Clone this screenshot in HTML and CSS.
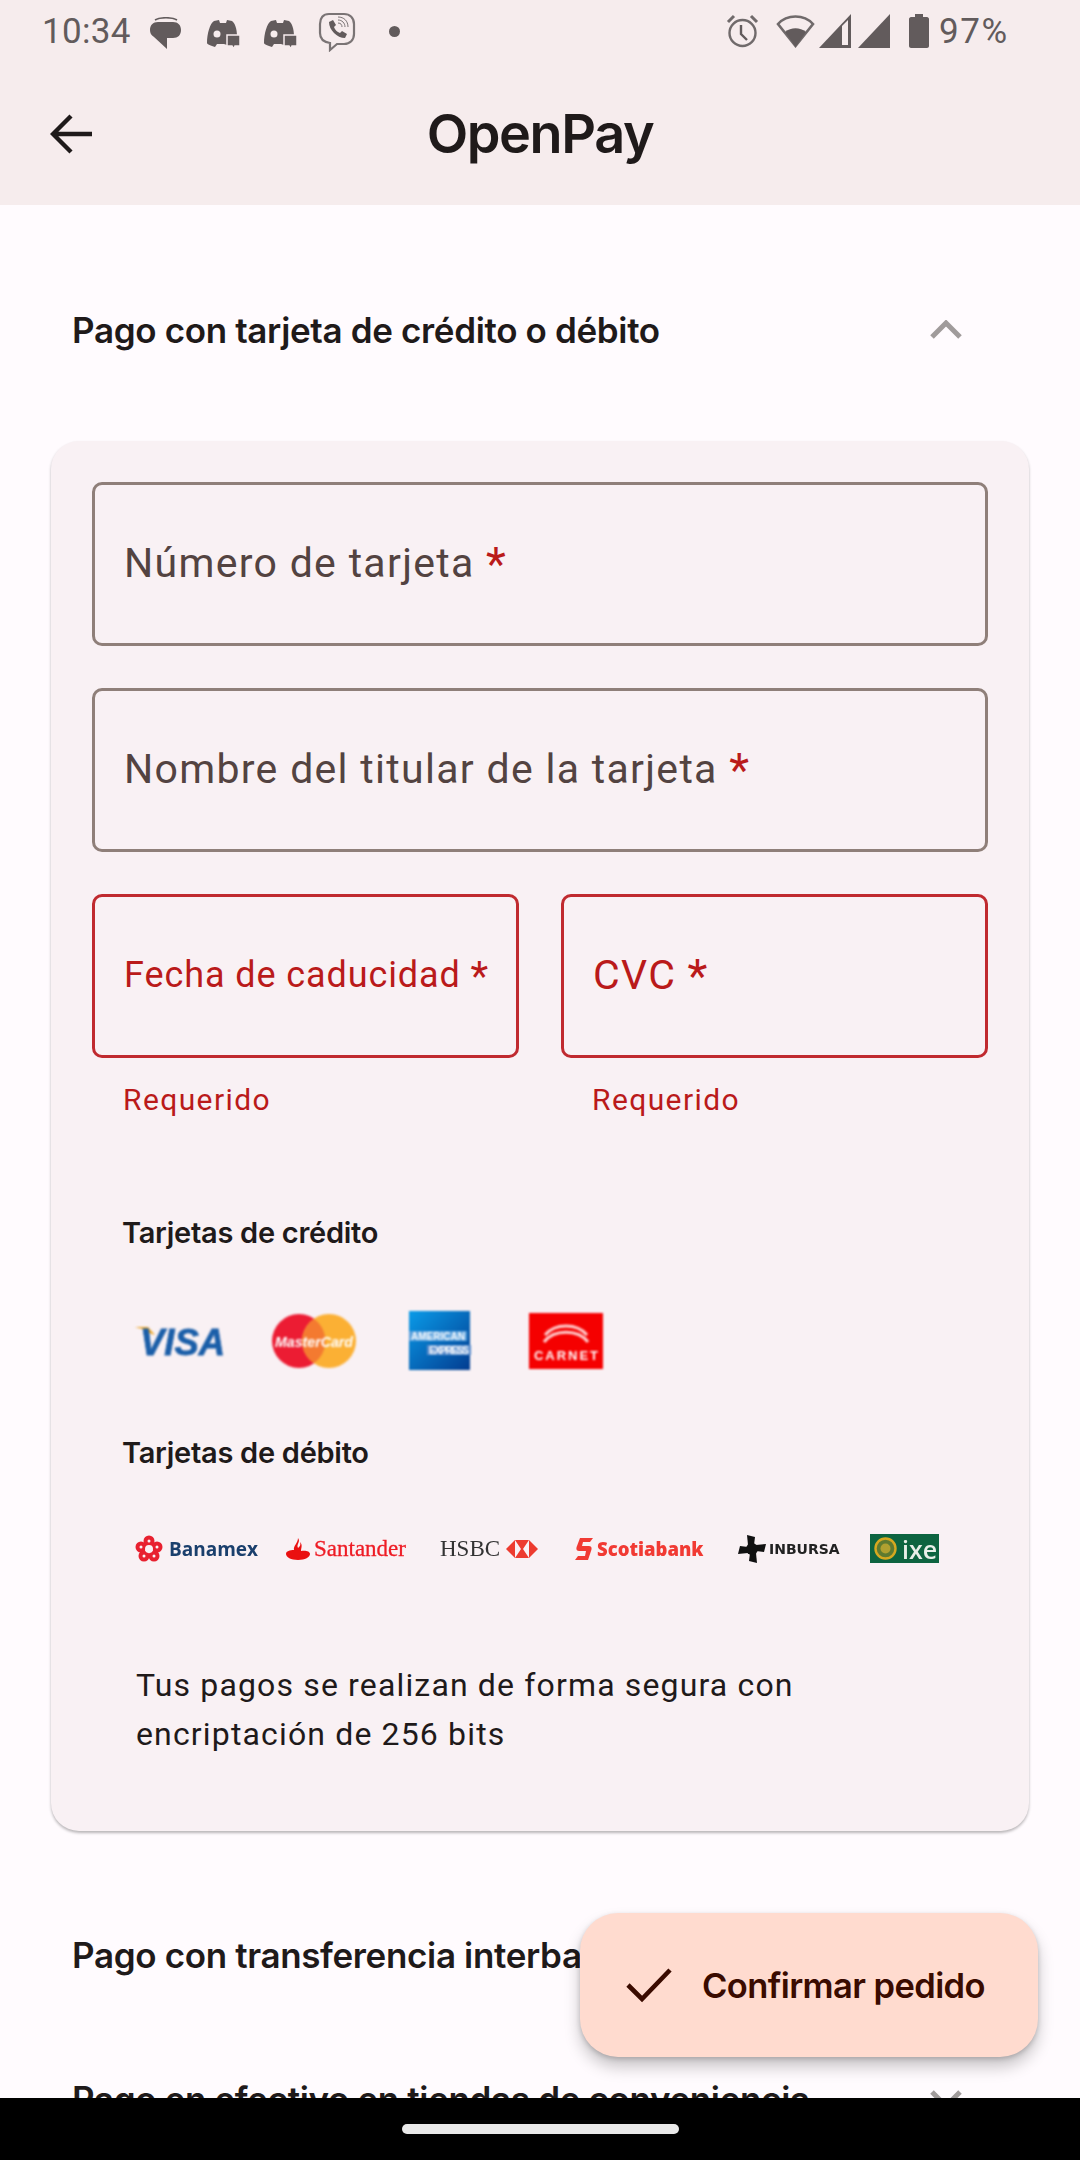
FILE: index.html
```html
<!DOCTYPE html>
<html lang="es">
<head>
    <meta charset="UTF-8">
    <title>OpenPay</title>
    <link rel="stylesheet" href="styles.css">
</head>
<body>
<div class="screen">
    <header class="appbar">
        <div class="statusbar">
            <span class="time">10:34</span>
            <svg class="st-ico" style="left:150px;top:17px" width="32" height="33" viewBox="0 0 32 33"><path d="M5 3C10 0 22 0 27 3" fill="none" stroke="#625b5c" stroke-width="1.6"/><path d="M8 5h15c5 0 8 3 8 8s-3 8-8 8h-6v11L4 20C1 18 0 16 0 13 0 8 3 5 8 5z" fill="#625b5c"/></svg>
            <svg class="st-ico" style="left:206px;top:19px" width="35" height="31" viewBox="0 0 35 31"><path d="M8 2l5-1 1 3h6l1-3 5 1c3 2 5 8 5 15h-7l-3 3v6l-3-1H11l-2 3c-4-1-8-3-8-4 0-9 3-20 7-22z" fill="#625b5c"/><circle cx="11" cy="15" r="3.5" fill="#f6eced"/><path d="M21 16h13v11h-5l-1 3-2-3h-5z" fill="#625b5c" stroke="#f6eced" stroke-width="1.5"/></svg>
            <svg class="st-ico" style="left:263px;top:19px" width="35" height="31" viewBox="0 0 35 31"><path d="M8 2l5-1 1 3h6l1-3 5 1c3 2 5 8 5 15h-7l-3 3v6l-3-1H11l-2 3c-4-1-8-3-8-4 0-9 3-20 7-22z" fill="#625b5c"/><circle cx="11" cy="15" r="3.5" fill="#f6eced"/><path d="M21 16h13v11h-5l-1 3-2-3h-5z" fill="#625b5c" stroke="#f6eced" stroke-width="1.5"/></svg>
            <svg class="st-ico" style="left:318px;top:12px" width="38" height="40" viewBox="0 0 38 40"><path d="M11 2h15c6 0 10 4 10 10v10c0 6-4 10-10 10h-7l-7 6v-7C5 30 2 27 2 21v-9C2 6 5 2 11 2z" fill="none" stroke="#7a7475" stroke-width="2.2"/><path d="M11 10l4-2 3 5-2 2c1 3 3 5 6 6l2-2 5 3-2 4c-8 0-16-8-16-16z" fill="#625b5c"/><path d="M20 8c4 0 7 3 7 7M20 11c3 0 4 2 4 4M20 5c6 0 10 4 10 10" fill="none" stroke="#7a7475" stroke-width="1"/></svg>
            <span class="st-dot"></span>
            <svg class="st-ico" style="left:726px" width="33" height="34" viewBox="0 0 33 34"><circle cx="16.5" cy="19" r="13" fill="none" stroke="#706a6b" stroke-width="2.4"/><path d="M15 11v9l6 6" fill="none" stroke="#625b5c" stroke-width="2.4"/><path d="M2 8l6-6M31 8l-6-6" stroke="#706a6b" stroke-width="3"/></svg>
            <svg class="st-ico" style="left:776px" width="39" height="34" viewBox="0 0 39 34"><path d="M19.5 32L2 10C11 0 28 0 37 10z" fill="none" stroke="#706a6b" stroke-width="2.6"/><path d="M19.5 33L9 18c6-5 15-5 21 0z" fill="#625b5c"/></svg>
            <svg class="st-ico" style="left:819px" width="32" height="34" viewBox="0 0 32 34"><path d="M0 34L32 0v34z" fill="#625b5c"/><path d="M23 12l6-6v25h-6z" fill="#f6eced"/></svg>
            <svg class="st-ico" style="left:858px" width="32" height="34" viewBox="0 0 32 34"><path d="M0 34L32 0v34z" fill="#625b5c"/></svg>
            <svg class="st-ico" style="left:909px" width="20" height="34" viewBox="0 0 20 34"><path d="M6 0h8v3h4c1 0 2 1 2 2v27c0 1-1 2-2 2H2c-1 0-2-1-2-2V5c0-1 1-2 2-2h4z" fill="#625b5c"/></svg>
            <span class="battery">97%</span>
        </div>
        <div class="toolbar">
            <svg class="back" width="42" height="42" viewBox="0 0 42 42"><path d="M42 21H4M21 3L3 21l18 18" fill="none" stroke="#1f1a1a" stroke-width="4.4"/></svg>
            <h1 class="title">OpenPay</h1>
        </div>
    </header>

    <main class="content">
        <section class="acc-head">
            <h2>Pago con tarjeta de crédito o débito</h2>
            <svg class="chev" width="32" height="20" viewBox="0 0 32 20"><path d="M2 17L16 3l14 14" fill="none" stroke="#a09b9b" stroke-width="5"/></svg>
        </section>

        <div class="card">
            <div class="field"><span class="label">Número de tarjeta <b>*</b></span></div>
            <div class="field"><span class="label">Nombre del titular de la tarjeta <b>*</b></span></div>
            <div class="field-row">
                <div>
                    <div class="field field-error"><span class="label label-small">Fecha de caducidad <b>*</b></span></div>
                    <p class="helper">Requerido</p>
                </div>
                <div>
                    <div class="field field-error"><span class="label">CVC <b>*</b></span></div>
                    <p class="helper">Requerido</p>
                </div>
            </div>

            <h3 class="brand-title first">Tarjetas de crédito</h3>
            <div class="credit-logos">
                <svg width="94" height="36" viewBox="0 0 94 36"><path d="M0 4h13l7 8-6-2-3-3z" fill="#eda523"/><text x="5" y="32" class="lg-visa" textLength="85" lengthAdjust="spacingAndGlyphs">VISA</text></svg>
                <svg width="84" height="54" viewBox="0 0 84 54" class="lg-mc"><circle cx="27" cy="27" r="27" fill="#ec1c33"/><circle cx="57" cy="27" r="27" fill="#fbb034"/><path d="M42 5a27 27 0 0 1 0 44a27 27 0 0 1 0-44z" fill="#f47a30"/><text x="3" y="33" class="lg-mc-text" textLength="78" lengthAdjust="spacingAndGlyphs">MasterCard</text></svg>
                <svg width="68" height="62" viewBox="0 0 68 62" class="lg-amex"><defs><linearGradient id="amex" x1="0" y1="0" x2="1" y2="1"><stop offset="0" stop-color="#0a9be8"/><stop offset="1" stop-color="#023c90"/></linearGradient></defs><rect x="6" y="1" width="61" height="59" fill="url(#amex)"/><rect x="6" y="21" width="58" height="10" fill="#5aa0dc"/><rect x="24" y="35" width="44" height="10" fill="#5a8ccc"/><text x="8" y="30" class="lg-amex-text" textLength="54">AMERICAN</text><text x="26" y="44" class="lg-amex-text" textLength="40">EXPRESS</text></svg>
                <svg width="74" height="56" viewBox="0 0 74 56" class="lg-carnet"><rect width="74" height="56" fill="#f50000"/><path d="M16 22c10-12 32-12 42 0M15 29c10-13 34-13 44 0" fill="none" stroke="#ffd0d0" stroke-width="3"/><text x="37" y="47" text-anchor="middle" class="lg-carnet-text" textLength="64">CARNET</text></svg>
            </div>

            <h3 class="brand-title">Tarjetas de débito</h3>
            <div class="debit-logos">
                <span class="bank banamex"><svg width="28" height="28" viewBox="0 0 28 28"><circle cx="14" cy="6" r="5.5" fill="#e8202f"/><circle cx="6" cy="12" r="5.5" fill="#e8202f"/><circle cx="22" cy="12" r="5.5" fill="#e8202f"/><circle cx="9" cy="21" r="5.5" fill="#e8202f"/><circle cx="19" cy="21" r="5.5" fill="#e8202f"/><circle cx="14" cy="14" r="4" fill="#f9f1f4"/><circle cx="6" cy="12" r="1.5" fill="#f9f1f4"/><circle cx="22" cy="12" r="1.5" fill="#f9f1f4"/><circle cx="14" cy="6" r="1.5" fill="#f9f1f4"/><circle cx="9" cy="21" r="1.5" fill="#f9f1f4"/><circle cx="19" cy="21" r="1.5" fill="#f9f1f4"/></svg>Banamex</span>
                <span class="bank santander"><svg width="24" height="22" viewBox="0 0 24 22"><path d="M12 0c3 4-2 6 0 10 2-2 3-3 2-6 3 3 1 6 1 9 4-1 9 0 9 3 0 3-5 6-12 6S0 19 0 16c0-3 4-4 8-4-1-4 4-7 4-12z" fill="#ea1010"/></svg>Santander</span>
                <span class="bank hsbc">HSBC<svg width="32" height="18" viewBox="0 0 32 18"><path d="M0 9L9 0h14l9 9-9 9H9z" fill="#ed3b2f"/><path d="M9 0l6 9-6 9zM23 0l-6 9 6 9z" fill="#f9f1f4"/></svg></span>
                <span class="bank scotia"><svg width="18" height="22" viewBox="0 0 18 22"><path d="M5 0h13l-3 4H8L7 8h7c3 0 3 3 2 5l-3 9H0l3-4h7l1-5H4C1 13 1 10 2 8z" fill="#f13a33"/></svg>Scotiabank</span>
                <span class="bank inbursa"><svg width="28" height="28" viewBox="0 0 28 28"><g fill="#111"><path d="M9 0l8 2-1 8h-6z"/><path d="M9 0l8 2-1 8h-6z" transform="rotate(90 14 14)"/><path d="M9 0l8 2-1 8h-6z" transform="rotate(180 14 14)"/><path d="M9 0l8 2-1 8h-6z" transform="rotate(270 14 14)"/><circle cx="14" cy="14" r="6"/></g></svg>INBURSA</span>
                <span class="bank ixe"><svg width="23" height="23" viewBox="0 0 23 23"><circle cx="11.5" cy="11.5" r="10" fill="#5e7a30" stroke="#d5a820" stroke-width="2.4"/><circle cx="11.5" cy="11.5" r="5" fill="#b0a030"/></svg>ixe</span>
            </div>

            <p class="secure">Tus pagos se realizan de forma segura con encriptación de 256 bits</p>
        </div>

        <section class="acc-head">
            <h2>Pago con transferencia interbancaria</h2>
        </section>
        <section class="acc-head acc-last">
            <h2>Pago en efectivo en tiendas de conveniencia</h2>
            <svg class="chev" width="32" height="20" viewBox="0 0 32 20"><path d="M2 3l14 14L30 3" fill="none" stroke="#a09b9b" stroke-width="5"/></svg>
        </section>
    </main>

    <button class="fab">
        <svg width="46" height="36" viewBox="0 0 46 36"><path d="M2 18l14 14L44 3" fill="none" stroke="#3a0b00" stroke-width="4.6"/></svg>
        Confirmar pedido
    </button>

    <div class="navbar"><span class="handle"></span></div>
</div>
</body>
</html>
```

FILE: styles.css
```css
* {
    box-sizing: border-box;
}

html, body {
    margin: 0;
    padding: 0;
    background-color: #fffbfe;
}

body {
    font-family: Inter, Roboto, sans-serif;
}

.screen {
    position: relative;
    width: 1080px;
    height: 2160px;
    display: flex;
    flex-direction: column;
    overflow: hidden;
}

/* barra superior */
.appbar {
    height: 205px;
    flex: none;
    background-color: #f6eced;
}

.statusbar {
    position: relative;
    height: 62px;
}

.st-ico {
    position: absolute;
    top: 14px;
}

.time, .battery {
    position: absolute;
    top: 12px;
    font-family: Roboto, sans-serif;
    font-size: 35px;
    line-height: 40px;
    color: #625b5c;
}

.time {
    left: 42px;
    letter-spacing: 0.3px;
}

.battery {
    left: 939px;
    letter-spacing: 1.6px;
}

.st-dot {
    position: absolute;
    left: 389px;
    top: 26px;
    width: 11px;
    height: 11px;
    border-radius: 50%;
    background-color: #625b5c;
}

.toolbar {
    height: 143px;
    display: flex;
    align-items: center;
    justify-content: center;
    position: relative;
}

.back {
    position: absolute;
    left: 50px;
    top: 51px;
}

.title {
    margin: 0;
    font-size: 54px;
    font-weight: 600;
    letter-spacing: -1.4px;
    color: #1f1a1a;
}

/* contenido */
.content {
    flex: 1;
    padding-top: 54px;
    overflow: hidden;
}

.acc-head {
    height: 142px;
    padding: 0 118px 0 72px;
    display: flex;
    align-items: center;
    justify-content: space-between;
}

.acc-last {
    padding-top: 4px;
}

.acc-head h2 {
    margin: 0;
    font-size: 35px;
    font-weight: 600;
    letter-spacing: -0.35px;
    color: #1f1a1a;
    white-space: nowrap;
}

.card {
    margin: 40px 51px 53px;
    height: 1390px;
    padding: 41px 41px 0;
    background-color: #f9f1f4;
    border-radius: 28px;
    box-shadow: 0 2px 3px rgba(0, 0, 0, 0.28);
}

.field {
    height: 164px;
    margin-bottom: 42px;
    padding: 0 0 2px 29px;
    display: flex;
    align-items: center;
    border: 3px solid #8f7f79;
    border-radius: 10px;
}

.label {
    font-family: Roboto, sans-serif;
    font-size: 41px;
    letter-spacing: 1.3px;
    color: #534341;
    white-space: nowrap;
}

.label b {
    font-size: 46px;
    line-height: 0;
    font-weight: 400;
    letter-spacing: 0;
    vertical-align: -3px;
    color: #ba1a1a;
}

.label-small {
    font-size: 36px;
    letter-spacing: 0.9px;
}

.label-small b {
    font-size: 41px;
    vertical-align: -3px;
}

.field-row {
    display: grid;
    grid-template-columns: 427px 427px;
    gap: 42px;
}

.field-error {
    margin-bottom: 0;
    border-color: #c02a2f;
}

.field-error .label {
    color: #ba1a1a;
}

.helper {
    margin: 25px 0 0 31px;
    font-family: Roboto, sans-serif;
    font-size: 30px;
    line-height: 34px;
    letter-spacing: 1.4px;
    color: #ba1a1a;
}

.brand-title {
    margin: 0 0 0 30px;
    font-size: 29px;
    line-height: 36px;
    font-weight: 600;
    letter-spacing: -0.28px;
    color: #1f1a1a;
}

.brand-title.first {
    margin-top: 98px;
}

.credit-logos {
    height: 184px;
    padding: 0 0 5px 43px;
    display: flex;
    align-items: center;
    gap: 43px;
}

.credit-logos svg {
    flex: none;
    overflow: visible;
    filter: blur(0.8px);
}

.lg-amex {
    margin-left: 4px;
}

.lg-carnet {
    margin-left: 15px;
}

.lg-visa {
    font-family: "Liberation Sans", sans-serif;
    font-size: 37px;
    font-weight: 700;
    font-style: italic;
    fill: #1a5ea8;
    stroke: #1a5ea8;
    stroke-width: 0.8px;
}

.lg-mc-text {
    font-family: "Liberation Sans", sans-serif;
    font-size: 15px;
    font-weight: 700;
    font-style: italic;
    fill: #fff;
}

.lg-amex-text {
    font-family: "Liberation Sans", sans-serif;
    font-size: 10px;
    font-weight: 700;
    fill: #fff;
}

.lg-carnet-text {
    font-family: "Liberation Sans", sans-serif;
    font-size: 13px;
    font-weight: 700;
    fill: #fff;
}

.debit-logos {
    height: 158px;
    padding: 0 0 3px 43px;
    display: flex;
    align-items: center;
}

.bank {
    flex: none;
    display: flex;
    align-items: center;
    gap: 6px;
    filter: blur(0.5px);
    white-space: nowrap;
}

.banamex {
    width: 151px;
    font-family: "Open Sans", sans-serif;
    font-size: 19px;
    font-weight: 700;
    color: #1a3f6c;
}

.santander {
    width: 154px;
    gap: 4px;
    font-family: "Liberation Serif", serif;
    font-size: 23px;
    -webkit-text-stroke: 0.3px #ee1c25;
    color: #ee1c25;
}

.hsbc {
    width: 135px;
    font-family: "Liberation Serif", serif;
    font-size: 23px;
    color: #333;
}

.scotia {
    width: 163px;
    gap: 4px;
    font-family: "Open Sans", sans-serif;
    font-size: 18.5px;
    font-weight: 800;
    color: #f13a33;
}

.inbursa {
    width: 132px;
    gap: 3px;
    font-family: "DejaVu Sans", sans-serif;
    font-size: 14px;
    font-weight: 700;
    color: #222;
}

.ixe {
    width: 69px;
    height: 29px;
    padding-left: 4px;
    gap: 5px;
    font-family: "Open Sans", sans-serif;
    font-size: 25px;
    line-height: 28px;
    font-weight: 600;
    color: #e8efe8;
    background-color: #0d6440;
}

.secure {
    margin: 32px 40px 0 44px;
    font-family: Roboto, sans-serif;
    font-size: 32px;
    line-height: 49px;
    letter-spacing: 1.15px;
    color: #1f1a1a;
}

/* boton flotante */
.fab {
    position: absolute;
    left: 580px;
    top: 1913px;
    width: 458px;
    height: 144px;
    padding: 0 0 0 46px;
    display: flex;
    align-items: center;
    gap: 30px;
    font-family: Inter, sans-serif;
    font-size: 34.5px;
    font-weight: 600;
    letter-spacing: -0.6px;
    color: #3a0b00;
    background-color: #ffdbcf;
    border: none;
    border-radius: 38px;
    box-shadow: 0 10px 16px rgba(0, 0, 0, 0.22), 0 2px 5px rgba(0, 0, 0, 0.18);
}

.navbar {
    height: 62px;
    flex: none;
    display: flex;
    justify-content: center;
    padding-top: 26px;
    background-color: #000;
}

.handle {
    width: 277px;
    height: 10px;
    border-radius: 5px;
    background-color: #e9e9e9;
}
```
